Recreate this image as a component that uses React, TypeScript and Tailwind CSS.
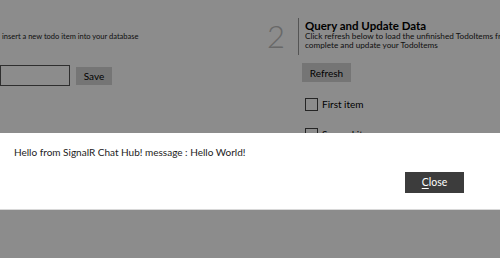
import React from 'react';

const FONT = "font-['Lato','Open_Sans',sans-serif]";

const TodoColumnLeft: React.FC = () => (
  <div className="w-[267px] shrink-0 flex flex-col">
    <p className="mt-[15px] pl-[2px] text-[7.5px] leading-[10px] text-[#222] whitespace-nowrap">
      insert a new todo item into your database
    </p>
    <div className="mt-[23px] flex items-center gap-[6px]">
      <input
        className="w-[70px] h-[21px] border border-[#555] bg-white outline-none"
        readOnly
      />
      <button className="w-[36px] h-[18px] bg-[#d6d6d6] text-[10px] leading-none text-black">
        Save
      </button>
    </div>
  </div>
);

const TodoColumnRight: React.FC = () => (
  <div className="flex flex-col">
    <div className="flex">
      <div className="w-[31px] text-[31px] leading-none font-light text-[#bdbdbd] pt-[4px]">2</div>
      <div className="mt-[1px] w-px h-[37px] bg-[#9a9a9a]" />
      <div className="pl-[6px] pt-[2px]">
        <h2 className="text-[11.5px] font-bold leading-[13px] text-black whitespace-nowrap">
          Query and Update Data
        </h2>
        <p className="text-[8.2px] leading-[9px] text-[#222] whitespace-nowrap">
          Click refresh below to load the unfinished TodoItems from your database. Use the checkbox to
          <br />
          complete and update your TodoItems
        </p>
      </div>
    </div>
    <button className="mt-[8px] ml-[35px] w-[49px] h-[19px] bg-[#d6d6d6] text-[10px] leading-none text-black">
      Refresh
    </button>
    <ul className="mt-[16px] ml-[38px] flex flex-col gap-[17px]">
      {['First item', 'Second item'].map((item) => (
        <li key={item} className="flex items-start gap-[4px]">
          <span className="w-[13px] h-[13px] border border-[#444] bg-white" />
          <span className="text-[10px] leading-[13px] text-black">{item}</span>
        </li>
      ))}
    </ul>
  </div>
);

export default function App() {
  return (
    <div className={`relative w-[500px] h-[258px] overflow-hidden bg-white ${FONT}`}>
      <div className="flex pt-[17px]">
        <TodoColumnLeft />
        <TodoColumnRight />
      </div>

      {/* dimmed backdrop */}
      <div className="absolute inset-0 bg-black/45" />

      {/* message dialog */}
      <div className="absolute left-0 right-0 top-[133px] h-[77px] bg-white border-b border-[#d8d8d8] flex flex-col px-[14px]">
        <p className="mt-[13px] text-[10px] leading-[12px] text-[#222] whitespace-nowrap">
          Hello from SignalR Chat Hub! message : Hello World!
        </p>
        <div className="mt-[14px] flex justify-end pr-[22px]">
          <button className="w-[59px] h-[21px] bg-[#3c3c3c] text-white text-[10.5px] leading-none">
            <span className="underline underline-offset-2">C</span>lose
          </button>
        </div>
      </div>
    </div>
  );
}
